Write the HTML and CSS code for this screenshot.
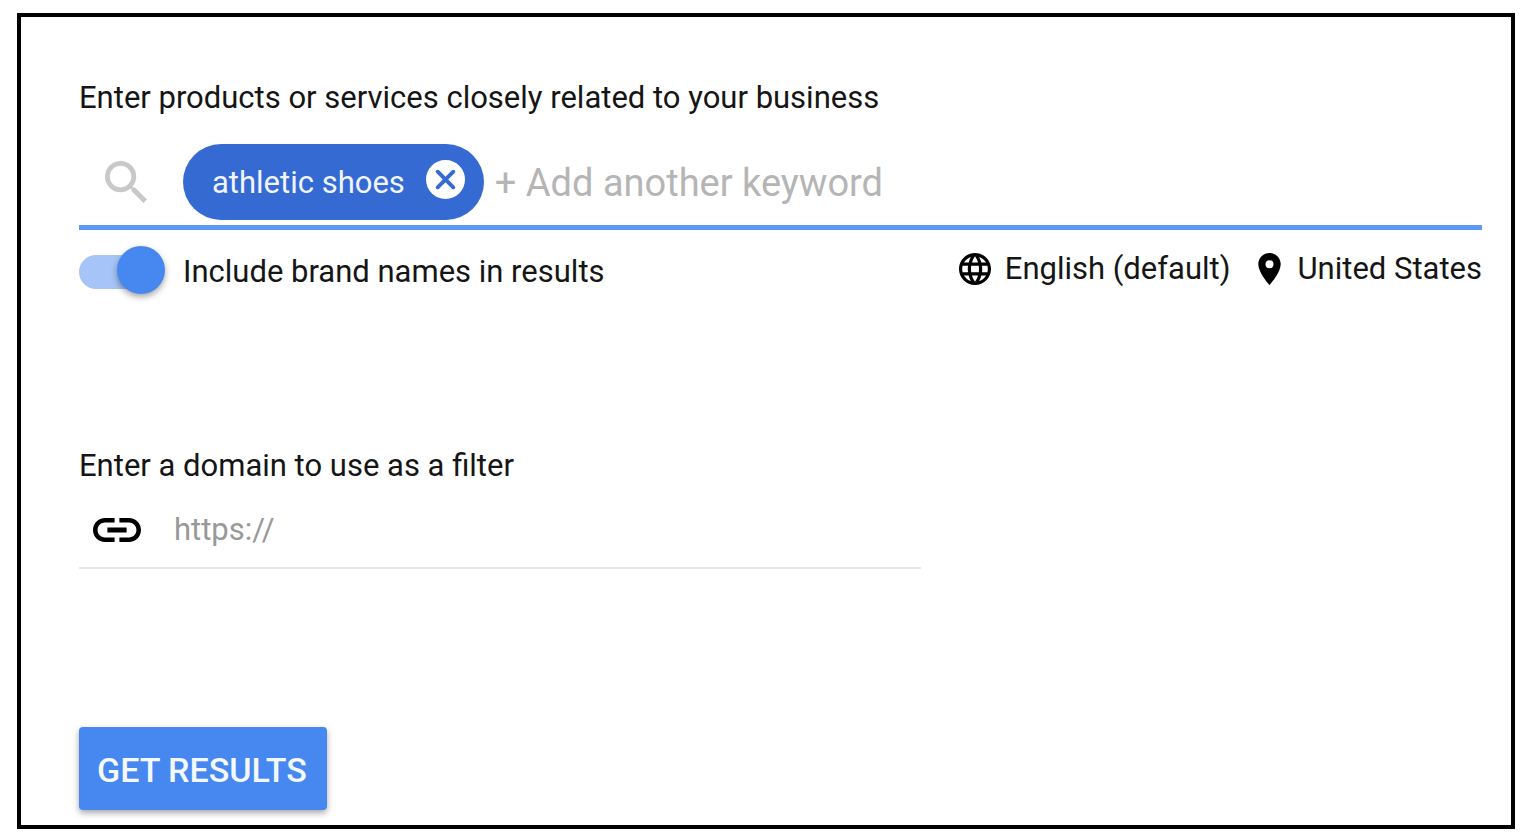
FILE: index.html
```html
<!DOCTYPE html>
<html lang="en">
<head>
<meta charset="utf-8">
<title>Keyword search</title>
<link rel="stylesheet" href="styles.css">
</head>
<body>
<form class="panel">
  <label class="label" for="keyword">Enter products or services closely related to your business</label>
  <div class="keywords">
    <svg class="search-icon" viewBox="3 3 17.5 17.5" aria-hidden="true"><path fill="currentColor" d="M15.5 14h-.79l-.28-.27A6.471 6.471 0 0 0 16 9.5 6.5 6.5 0 1 0 9.5 16c1.61 0 3.09-.59 4.23-1.57l.27.28v.79l5 4.99L20.49 19l-4.99-5zm-6 0C7.01 14 5 11.99 5 9.5S7.01 5 9.5 5 14 7.01 14 9.5 11.99 14 9.5 14z"/></svg>
    <span class="chip">
      <span class="chip-text">athletic shoes</span>
      <button class="chip-remove" type="button" aria-label="Remove athletic shoes">
        <svg class="chip-icon" viewBox="0 0 40 40" aria-hidden="true"><circle cx="20" cy="20" r="20" fill="#fff"/><path d="M12 12l16 16M28 12L12 28" stroke="#356ad2" stroke-width="4" stroke-linecap="round"/></svg>
      </button>
    </span>
    <input class="keyword-input" id="keyword" type="text" placeholder="+ Add another keyword">
  </div>
  <div class="options">
    <label class="toggle"><input class="switch" type="checkbox" role="switch" checked><span class="toggle-text">Include brand names in results</span></label>
    <div class="locale">
      <button class="locale-button" type="button">
        <svg class="globe-icon" viewBox="2 2 20 20" aria-hidden="true"><path fill="currentColor" d="M11.990 2C6.470 2 2 6.480 2 12s4.470 10 9.990 10C17.520 22 22 17.520 22 12S17.520 2 11.990 2zm6.930 6h-2.950c-.32-1.250-.78-2.450-1.380-3.560 1.840.63 3.370 1.910 4.330 3.560zM12 4.040c.83 1.200 1.480 2.530 1.910 3.960h-3.820c.43-1.430 1.080-2.760 1.910-3.960zM4.260 14C4.100 13.360 4 12.690 4 12s.1-1.360.26-2h3.380c-.08.66-.14 1.320-.14 2s.06 1.340.14 2H4.260zm.82 2h2.950c.32 1.250.78 2.450 1.380 3.560-1.840-.63-3.370-1.900-4.330-3.560zm2.950-8H5.080c.96-1.660 2.490-2.930 4.330-3.560C8.810 5.550 8.350 6.750 8.030 8zM12 19.960c-.83-1.200-1.480-2.530-1.910-3.960h3.820c-.43 1.430-1.080 2.760-1.910 3.960zM14.340 14H9.660c-.09-.66-.16-1.320-.16-2s.07-1.350.16-2h4.680c.09.65.16 1.320.16 2s-.07 1.340-.16 2zm.25 5.560c.6-1.110 1.060-2.310 1.380-3.560h2.950c-.96 1.650-2.490 2.930-4.330 3.560zM16.360 14c.08-.66.14-1.320.14-2s-.06-1.340-.14-2h3.380c.16.64.26 1.310.26 2s-.1 1.360-.26 2h-3.380z"/></svg>
        English (default)
      </button>
      <button class="locale-button" type="button">
        <svg class="pin-icon" viewBox="5 2 14 20" aria-hidden="true"><path fill="currentColor" d="M12 2C8.130 2 5 5.130 5 9c0 5.250 7 13 7 13s7-7.750 7-13c0-3.870-3.130-7-7-7zm0 9.500a2.500 2.500 0 0 1 0-5 2.500 2.500 0 0 1 0 5z"/></svg>
        United States
      </button>
    </div>
  </div>
  <label class="label domain-label" for="domain">Enter a domain to use as a filter</label>
  <div class="domain">
    <svg class="link-icon" viewBox="2 7 20 10" aria-hidden="true"><path fill="currentColor" d="M3.900 12c0-1.710 1.390-3.100 3.100-3.100h4V7H7c-2.760 0-5 2.240-5 5s2.240 5 5 5h4v-1.900H7c-1.710 0-3.100-1.390-3.100-3.100zM8 13h8v-2H8v2zm9-6h-4v1.900h4c1.710 0 3.100 1.390 3.100 3.100s-1.390 3.100-3.100 3.100h-4V17h4c2.760 0 5-2.240 5-5s-2.240-5-5-5z"/></svg>
    <input class="domain-input" id="domain" type="text" placeholder="https://">
  </div>
  <button class="submit" type="submit">GET RESULTS</button>
</form>
</body>
</html>
```
FILE: styles.css
```css
* {
  box-sizing: border-box;
}

body {
  margin: 0;
  padding: 13px 21px 11px 17px;
  background: #fff;
  color: #151515;
  font: 31px/36px Roboto, sans-serif;
}

button,
input {
  margin: 0;
  padding: 0;
  border: 0;
  background: none;
  color: inherit;
  font: inherit;
}

button {
  cursor: pointer;
}

.panel {
  display: flex;
  flex-direction: column;
  padding: 63px 29px 15px 58px;
  border: 4px solid #000;
}

.label {
  align-self: flex-start;
}

.keywords {
  display: flex;
  align-items: center;
  margin-top: 28px;
  padding: 0 0 5px 26px;
  border-bottom: 5px solid #5c98f7;
}

.search-icon {
  width: 42px;
  height: 42px;
  margin-right: 36px;
  color: #c8c8c8;
}

.chip {
  display: flex;
  align-items: center;
  height: 76px;
  padding: 0 19px 0 29px;
  border-radius: 38px;
  background: #356ad2;
  color: #f0f5ff;
}

.chip-text {
  padding-top: 2px;
}

.chip-remove {
  display: flex;
  margin: 0 0 6px 21px;
}

.chip-icon {
  width: 39px;
  height: 39px;
}

.keyword-input {
  flex: 1;
  min-width: 0;
  margin-left: 11px;
  padding-top: 2px;
  font-size: 38px;
  line-height: 44px;
}

.keyword-input::placeholder {
  color: #b5b5b5;
  opacity: 1;
}

.domain-input::placeholder {
  color: #999;
  opacity: 1;
}

.options {
  display: flex;
  align-items: flex-start;
  justify-content: space-between;
  margin-top: 16px;
}

.toggle {
  display: flex;
  align-items: center;
  gap: 18px;
}

.toggle-text {
  padding-top: 3px;
}

.switch {
  display: grid;
  align-items: center;
  width: 86px;
  height: 48px;
  appearance: none;
}

.switch::before,
.switch::after {
  content: "";
  grid-area: 1 / 1;
}

.switch::before {
  width: 72px;
  height: 34px;
  margin-top: 4px;
  border-radius: 17px;
  background: #a6c4f7;
}

.switch::after {
  justify-self: end;
  width: 48px;
  height: 48px;
  border-radius: 50%;
  background: #4788f0;
  box-shadow: 0 3px 6px rgba(0, 0, 0, .35);
}

.locale {
  display: flex;
  gap: 28px;
  margin-top: 5px;
}

.locale-button {
  display: flex;
  align-items: center;
  gap: 14px;
}

.globe-icon {
  width: 32px;
  height: 32px;
  color: #000;
}

.pin-icon {
  width: 23px;
  height: 32px;
  margin-right: 2px;
  color: #000;
}

.domain-label {
  margin-top: 154px;
}

.domain {
  display: flex;
  align-items: center;
  gap: 33px;
  width: 60%;
  margin-top: 28px;
  padding: 0 0 19px 14px;
  border-bottom: 2px solid #e8e8e8;
}

.link-icon {
  width: 48px;
  height: 24px;
  color: #000;
}

.domain-input {
  flex: 1;
  min-width: 0;
}

.submit {
  align-self: flex-start;
  margin-top: 158px;
  padding: 25px 20px 22px 18px;
  border-radius: 4px;
  background: #4788f0;
  box-shadow: 0 3px 6px rgba(0, 0, 0, .35);
  color: #f4f8ff;
  font-size: 34px;
  font-weight: 500;
  line-height: 36px;
}
```
